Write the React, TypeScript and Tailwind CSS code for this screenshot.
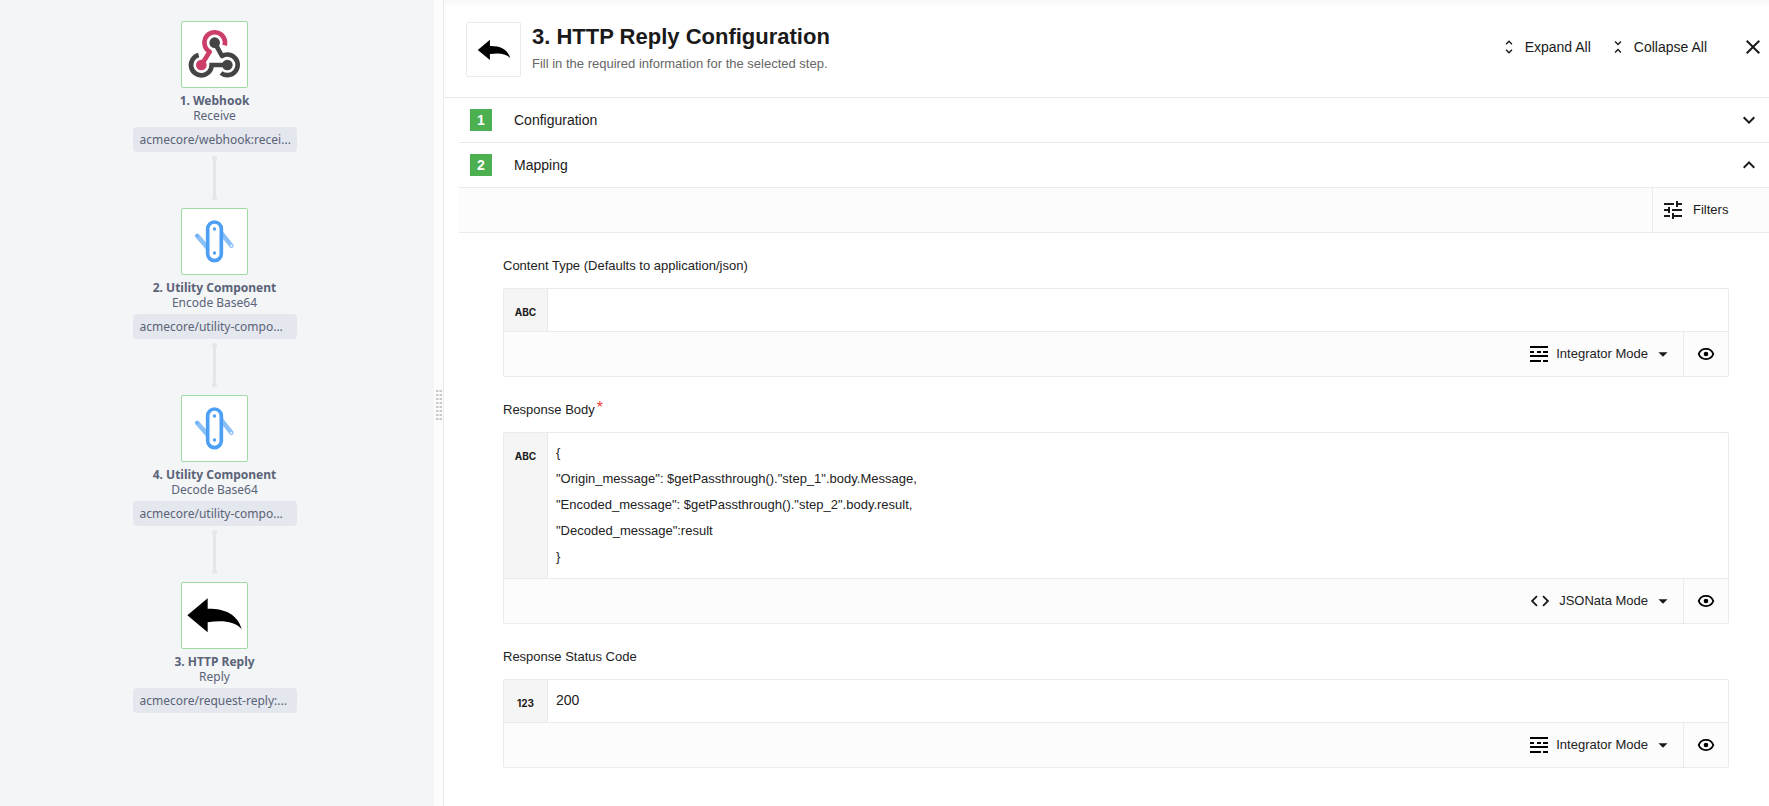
import React, { useId, useState } from "react";
import {
  MdArrowDropDown,
  MdClose,
  MdCode,
  MdExpandLess,
  MdExpandMore,
  MdTune,
  MdUnfoldLess,
  MdUnfoldMore,
} from "react-icons/md";

function WebhookIcon({ className }: { className: string }) {
  return (
    <svg viewBox="183 33 201 201" className={className} fill="none" strokeWidth="14" aria-hidden="true">
      <path d="M322 165H275A31 31 0 1 1 236 135" stroke="#444" />
      <path d="M284 98L306 138A31 31 0 1 1 303 189" stroke="#444" strokeLinejoin="round" />
      <path d="M244 165L269 125A31 31 0 1 1 314 106" stroke="#cc3e67" strokeLinejoin="round" />
      <circle cx="284" cy="98" r="16" fill="#444" />
      <circle cx="322" cy="165" r="16" fill="#444" />
      <circle cx="244" cy="165" r="16" fill="#cc3e67" />
    </svg>
  );
}

function UtilityIcon({ className }: { className: string }) {
  return (
    <svg viewBox="183 39 201 201" className={className} fill="none" aria-hidden="true">
      <path d="M232 123L264 160" stroke="#8cc1f8" strokeWidth="14" strokeLinecap="round" />
      <path d="M303 113L334 152" stroke="#8cc1f8" strokeWidth="14" strokeLinecap="round" />
      <circle cx="231" cy="122" r="5" fill="#6db0f7" />
      <circle cx="334" cy="152" r="3" fill="#fff" />
      <rect x="263" y="81" width="41" height="116" rx="20.5" fill="#fff" stroke="#4d9ff5" strokeWidth="11" />
      <circle cx="283.500" cy="102" r="5" fill="#4d9ff5" />
      <circle cx="283.500" cy="174" r="5" fill="#4d9ff5" />
    </svg>
  );
}

function ReplyIcon({ className }: { className: string }) {
  return (
    <svg viewBox="183 36 201 201" className={className} aria-hidden="true">
      <path d="M202 136L263 85V116C310 115 352 130 365 177C340 150 300 151 263 157V187Z" fill="#000" />
    </svg>
  );
}

function IntegratorIcon() {
  return (
    <svg viewBox="0 0 18 16" className="h-4 w-[18px]" aria-hidden="true">
      <path d="M0 0h18v2H0zM0 5h4v2H0zM7 5h4v2H7zM13 5h5v2h-5zM0 9h18v2H0zM0 14h11v2H0zM13 14h5v2h-5z" />
    </svg>
  );
}

function EyeIcon() {
  return (
    <svg viewBox="0 0 18 18" className="size-[18px]" aria-hidden="true">
      <path
        d="M1.700 9C3 5.600 5.700 3.900 9 3.900S15 5.600 16.300 9C15 12.400 12.300 14.100 9 14.100S3 12.400 1.700 9Z"
        fill="none"
        stroke="#000"
        strokeWidth="1.900"
      />
      <circle cx="9" cy="9" r="2.300" />
    </svg>
  );
}

type Step = {
  title: string;
  action: string;
  component: string;
  Icon: (props: { className: string }) => React.ReactElement;
};

const steps: Step[] = [
  { title: "1. Webhook", action: "Receive", component: "acmecore/webhook:recei...", Icon: WebhookIcon },
  { title: "2. Utility Component", action: "Encode Base64", component: "acmecore/utility-compo...", Icon: UtilityIcon },
  { title: "4. Utility Component", action: "Decode Base64", component: "acmecore/utility-compo...", Icon: UtilityIcon },
  { title: "3. HTTP Reply", action: "Reply", component: "acmecore/request-reply:...", Icon: ReplyIcon },
];

function FlowStep({ step, last }: { step: Step; last: boolean }) {
  const { Icon } = step;
  return (
    <li className="flex flex-col items-center">
      <button
        type="button"
        aria-label={step.title}
        className="flex size-[67px] items-center justify-center rounded-[2px] border border-[#9fdba3] bg-white"
      >
        <Icon className="size-[67px] shrink-0" />
      </button>
      <div className="mt-[5px] text-xs leading-[15px] font-bold">{step.title}</div>
      <div className="text-xs leading-[15px]">{step.action}</div>
      <div className="mt-1 w-[164px] rounded-[4px] bg-[#e4e7ee] px-[7px] text-xs leading-[25px] whitespace-nowrap">
        {step.component}
      </div>
      {!last && (
        <div className="flex h-14 flex-col items-center pt-1 pb-2">
          <span className="size-[5px] rounded-full bg-[#e5e6e8]" />
          <span className="-my-px w-[3px] flex-1 bg-[#e5e6e8]" />
          <span className="size-[5px] rounded-full bg-[#e5e6e8]" />
        </div>
      )}
    </li>
  );
}

function SectionRow({ index, title, open }: { index: number; title: string; open: boolean }) {
  const Chevron = open ? MdExpandLess : MdExpandMore;
  return (
    <button
      type="button"
      aria-expanded={open}
      className="flex h-[45px] w-full items-center border-b border-[#ebebeb] pr-2 pl-[11px] text-left text-sm"
    >
      <span className="mr-[22px] flex size-[22px] items-center justify-center bg-[#4caf50] font-bold text-white">
        {index}
      </span>
      <span className="flex-1">{title}</span>
      <Chevron className="size-6" />
    </button>
  );
}

type FieldProps = {
  label: string;
  tag: string;
  mode: "Integrator Mode" | "JSONata Mode";
  required?: boolean;
  initial?: string;
  multiline?: boolean;
};

function Field({ label, tag, mode, required, initial = "", multiline }: FieldProps) {
  const id = useId();
  const [value, setValue] = useState(initial);
  return (
    <div>
      <label htmlFor={id} className="flex h-[22px] items-center text-[#222]">
        {label}
        {required && <span className="mb-1 ml-[2px] text-base leading-4 text-[#f44336]">*</span>}
      </label>
      <div className="mt-[11px] rounded-[2px] border border-[#ebebeb]">
        <div className="flex">
          <div className="w-11 border-r border-[#ebebeb] bg-[#f5f5f5] pt-4 text-center font-['Inter',sans-serif] text-[10px] leading-[14px] font-bold">
            {tag}
          </div>
          {multiline ? (
            <textarea
              id={id}
              rows={5}
              value={value}
              onChange={(e) => setValue(e.target.value)}
              className="block flex-1 resize-none overflow-hidden px-2 pt-[7px] pb-2 leading-[26px] text-[#222] outline-none"
            />
          ) : (
            <input
              id={id}
              type="text"
              value={value}
              onChange={(e) => setValue(e.target.value)}
              className="h-[42px] flex-1 px-2 pb-[2px] text-sm text-[#222] outline-none"
            />
          )}
        </div>
        <div className="flex h-[45px] justify-end border-t border-[#ebebeb] bg-[#fcfcfc]">
          <div className="flex items-center pr-[9px]">
            {mode === "JSONata Mode" ? <MdCode className="size-[22px]" /> : <IntegratorIcon />}
            <select
              aria-label={label + " mode"}
              defaultValue={mode}
              className="field-sizing-content ml-2 appearance-none bg-transparent text-[#222] outline-none"
            >
              <option>Integrator Mode</option>
              <option>JSONata Mode</option>
            </select>
            <MdArrowDropDown className="ml-1 size-[22px]" />
          </div>
          <button
            type="button"
            aria-label="Preview"
            className="flex w-[45px] items-center justify-center border-l border-[#ebebeb]"
          >
            <EyeIcon />
          </button>
        </div>
      </div>
    </div>
  );
}

const responseBody = `{
"Origin_message": $getPassthrough()."step_1".body.Message,
"Encoded_message": $getPassthrough()."step_2".body.result,
"Decoded_message":result
}`;

export default function App() {
  return (
    <div className="flex min-h-screen bg-white font-['Liberation_Sans',Arial,sans-serif] text-[13px] text-[#1a1a1a]">
      <aside className="w-[434px] shrink-0 bg-[#f3f5f7] pt-[21px] pr-[5px] font-['Noto_Sans',sans-serif] text-[#5a6377]">
        <ol>
          {steps.map((step, i) => (
            <FlowStep key={step.title} step={step} last={i === steps.length - 1} />
          ))}
        </ol>
      </aside>

      <div className="flex w-[9px] shrink-0 cursor-col-resize flex-col items-center bg-[#fcfcfc] pt-[390px]">
        <div className="flex flex-col gap-[2px]">
          {Array.from({ length: 8 }, (_, i) => (
            <span key={i} className="flex h-[2px] w-[6px] justify-between bg-[#e4e4e4]">
              <span className="w-[2px] bg-[#c8c8c8]" />
              <span className="w-[2px] bg-[#c8c8c8]" />
            </span>
          ))}
        </div>
      </div>

      <main className="min-w-0 flex-1 border-l border-[#ebebeb]">
        <header className="flex h-[98px] items-start border-b border-[#ebebeb] pt-[22px] pr-1 pl-[22px] shadow-[inset_4px_6px_8px_-4px_rgba(0,0,0,0.04)]">
          <div className="flex size-[55px] items-center justify-center rounded-[2px] border border-[#ebebeb]">
            <ReplyIcon className="size-10" />
          </div>
          <div className="ml-[11px] flex-1">
            <h1 className="text-[22px] leading-[30px] font-bold">3. HTTP Reply Configuration</h1>
            <p className="leading-6 text-[#666]">Fill in the required information for the selected step.</p>
          </div>
          <div className="mt-[13px] flex items-center text-sm">
            <button type="button" className="flex items-center gap-[7px]">
              <MdUnfoldMore className="size-[18px]" />
              Expand All
            </button>
            <button type="button" className="ml-[18px] flex items-center gap-[7px]">
              <MdUnfoldLess className="size-[18px]" />
              Collapse All
            </button>
            <button type="button" aria-label="Close" className="ml-[34px]">
              <MdClose className="size-6" />
            </button>
          </div>
        </header>

        <div className="ml-[15px]">
          <SectionRow index={1} title="Configuration" open={false} />
          <SectionRow index={2} title="Mapping" open />
          <div className="flex h-[45px] justify-end border-b border-[#ebebeb] bg-[#fcfcfc]">
            <button type="button" className="flex w-[117px] items-center gap-2 border-l border-[#ebebeb] pl-2">
              <MdTune className="size-6" />
              Filters
            </button>
          </div>
        </div>

        <form className="flex flex-col gap-[22px] pt-[22px] pr-10 pb-[38px] pl-[59px]">
          <Field label="Content Type (Defaults to application/json)" tag="ABC" mode="Integrator Mode" />
          <Field
            label="Response Body"
            tag="ABC"
            mode="JSONata Mode"
            required
            multiline
            initial={responseBody}
          />
          <Field label="Response Status Code" tag="123" mode="Integrator Mode" initial="200" />
        </form>
      </main>
    </div>
  );
}
